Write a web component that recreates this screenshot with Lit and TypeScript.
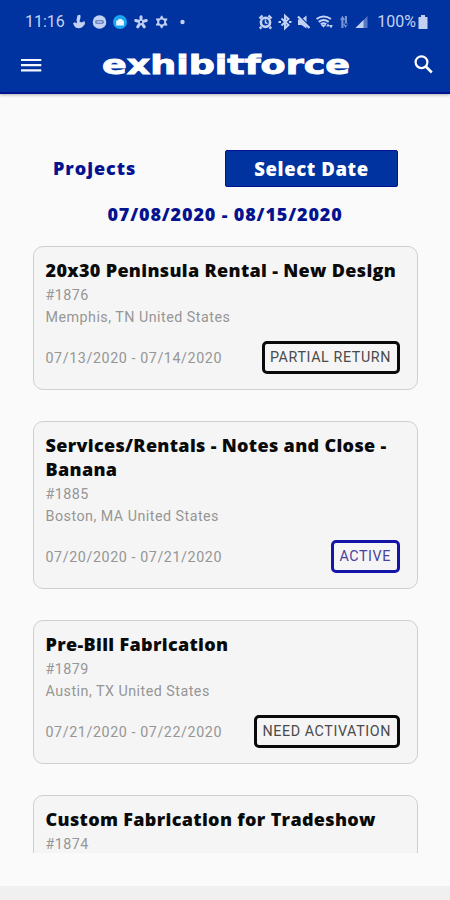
import { LitElement, html, css } from "lit";
import { customElement, property } from "lit/decorators.js";
import { classMap } from "lit/directives/class-map.js";

interface Project {
  title: string;
  number: string;
  location: string;
  dates: string;
  status: string;
  active?: boolean;
}

const projects: Project[] = [
  { title: "20x30 Peninsula Rental - New Design", number: "#1876", location: "Memphis, TN United States", dates: "07/13/2020 - 07/14/2020", status: "PARTIAL RETURN" },
  { title: "Services/Rentals - Notes and Close - Banana", number: "#1885", location: "Boston, MA United States", dates: "07/20/2020 - 07/21/2020", status: "ACTIVE", active: true },
  { title: "Pre-Bill Fabrication", number: "#1879", location: "Austin, TX United States", dates: "07/21/2020 - 07/22/2020", status: "NEED ACTIVATION" },
  { title: "Custom Fabrication for Tradeshow", number: "#1874", location: "", dates: "", status: "" },
];

@customElement("project-card")
class ProjectCard extends LitElement {
  @property({ attribute: false }) project!: Project;

  static styles = css`
    :host { display: block; flex: none; }
    .card {
      box-sizing: border-box;
      min-height: 144px;
      padding: 11px 17px 15px 11.5px;
      border: 1px solid #cfcfcf;
      border-radius: 10px;
      background: #f5f5f5;
      font-family: Roboto, sans-serif;
      color: #969696;
    }
    .title {
      margin: 0 -8px 2px 0;
      font: 800 18px/24px "Open Sans", sans-serif;
      letter-spacing: 0.33px;
      color: #0a0a0a;
    }
    .line { height: 22px; font-size: 14.3px; line-height: 22px; letter-spacing: 0.48px; }
    .foot { display: flex; justify-content: space-between; align-items: center; margin-top: 13px; height: 33px; }
    .foot .line { white-space: nowrap; letter-spacing: 0.58px; }
    .badge {
      box-sizing: border-box;
      height: 33px;
      padding: 0 6px 0 5px;
      border: 3px solid #0a0a0a;
      border-radius: 5px;
      font-size: 14.3px;
      line-height: 27px;
      letter-spacing: 0.6px;
      color: #4a4a4a;
      white-space: nowrap;
    }
    .badge.active { border-color: #1414a8; color: #4a40a0; }
  `;

  render() {
    const p = this.project;
    return html`
      <article class="card">
        <div class="title">${p.title}</div>
        <div class="line">${p.number}</div>
        <div class="line">${p.location}</div>
        ${p.status
          ? html`<div class="foot">
              <span class="line">${p.dates}</span>
              <span class=${classMap({ badge: true, active: !!p.active })}>${p.status}</span>
            </div>`
          : null}
      </article>
    `;
  }
}

@customElement("app-root")
class AppRoot extends LitElement {
  static styles = css`
    :host { display: block; }
    .screen { display: flex; flex-direction: column; width: 450px; height: 900px; overflow: hidden; background: #fafafa; }
    .top { flex: none; height: 94px; box-sizing: border-box; background: #0032a0; border-bottom: 2px solid #00128c; box-shadow: 0 1px 3px rgba(0, 0, 0, 0.3); color: #fff; }
    .status { display: flex; justify-content: space-between; align-items: center; height: 44px; padding: 0 22px 0 25px; font: 16px/46px Roboto, sans-serif; color: #c3d2f3; }
    .group { display: flex; align-items: center; height: 44px; }
    .clock { width: 41px; white-space: nowrap; }
    .icons { display: block; }
    .pct { white-space: nowrap; margin-right: 2px; }
    .bar { display: flex; align-items: center; height: 42px; }
    .menu { margin-left: 21px; }
    .logo { margin-left: 57px; overflow: visible; }
    .search { margin-left: 59px; }
    .bar svg { display: block; flex: none; }
    .head { display: flex; justify-content: space-between; align-items: center; flex: none; height: 37px; margin: 56px 52px 0 53px; font: 800 18px/37px "Open Sans", sans-serif; color: #04128f; }
    .projects { letter-spacing: 0.95px; }
    .button { width: 173px; height: 37px; box-sizing: border-box; border: 1px solid #04128f; border-radius: 2px; background: #0032a0; color: #fff; text-align: center; font-size: 18.5px; line-height: 35px; letter-spacing: 0.6px; }
    .range { flex: none; height: 26px; margin-top: 14px; text-align: center; font: 800 18px/26px "Open Sans", sans-serif; color: #04128f; letter-spacing: 0.85px; }
    .list { display: flex; flex-direction: column; gap: 31px; flex: none; height: 607px; margin: 19px 32px 0 33px; overflow: hidden; }
    .nav { flex: none; height: 14px; margin-top: 33px; background: #f0f0f0; }
  `;

  render() {
    return html`
      <main class="screen">
        <header class="top">
          <div class="status">
            <div class="group">
              <span class="clock">11:16</span>
              <svg class="icons" width="130" height="20" viewBox="66 12 130 20" fill="#c3d2f3">
                <path d="M77.500 15.5q2-1.500 3 0v2l-1 4 2 1 3-1.500.5 3-2.500 3q-4 2.500-7.500 0l-2-3.500 1.500-1.200 2.500 1-.5-3.500z" />
                <circle cx="99.500" cy="22" r="6.800" />
                <rect x="95" y="20" width="9" height="4" rx="2" fill="#7188c5" />
                <path d="M97 22h5" stroke="#d7e2fb" />
                <circle cx="120" cy="22" r="7" fill="#1ba5f2" />
                <path d="M116.200 20.500h1.500l1-1.500h3l1 1.500h1.200v5h-7.700z" fill="#e8f6ff" />
                <path d="M141 22V16.700M141 22l-5.300-1.500M141 22l5.300-1.500M141 22l-3.300 4.800M141 22l3.300 4.800" stroke="#c3d2f3" stroke-width="3" stroke-linecap="round" />
                <circle cx="141" cy="22" r="1.200" fill="#0032a0" />
                <path d="M161.700 15.800l1.800 3.100h3.600L165.300 22l1.800 3.100h-3.600l-1.800 3.100-1.800-3.100h-3.600l1.800-3.100-1.800-3.100h3.600z" stroke="#c3d2f3" stroke-linejoin="round" />
                <circle cx="161.700" cy="22" r="2.500" fill="#0032a0" />
                <circle cx="182.500" cy="22" r="2.200" />
              </svg>
            </div>
            <div class="group">
              <svg class="icons" width="119" height="20" viewBox="258 12 119 20" fill="#c3d2f3">
                <path d="M259.500 18.500l3-3M271.500 18.500l-3-3M261.500 27l-1.800 1.500M269.500 27l1.800 1.500" stroke="#c3d2f3" stroke-width="2.400" />
                <circle cx="265.500" cy="22.300" r="4.600" fill="none" stroke="#c3d2f3" stroke-width="2.600" />
                <path d="M265.500 19.500v3.200l2 1" fill="none" stroke="#c3d2f3" stroke-width="1.500" />
                <path d="M281.500 18.500l7 6.500-3.500 3.300V15.700l3.500 3.300-7 6.500M278.500 22h2.500M289 22h2.500" fill="none" stroke="#c3d2f3" stroke-width="2" />
                <path d="M298 19.500h3.500l5-4v13L301.500 25H298z" />
                <path d="M297.500 14.500l13 13" stroke="#0032a0" stroke-width="2" />
                <path d="M298 16.500l11.500 11.500" stroke="#c3d2f3" stroke-width="2.200" />
                <path d="M316.500 19q7-5 14.500 0M318.700 21.800q5-3.500 10 0M320.800 24.400q2.800-2 5.400 0" fill="none" stroke="#c3d2f3" stroke-width="2.100" />
                <path d="M323.500 27.500l-2.500-2.500h5zM328 23.500l1.800 3h-3.600zM331 28.500l-1.800-3.500h3.600z" />
                <path d="M340 20l2.500-4.500L345 20zM341.300 19h2.200v9h-2.200zM343 23.500l2.500 4.500 2.500-4.500zM344.800 16h2.200v9h-2.200z" opacity=".6" />
                <path d="M355.500 28L367.500 16v12z" opacity=".45" />
                <path d="M355.500 28l8-8v8z" />
              </svg>
              <span class="pct">100%</span>
              <svg class="icons" width="10" height="20" viewBox="0 0 10 20"><path d="M3 3h4v2h2.500v12H.5V5H3z" fill="#c3d2f3" /></svg>
            </div>
          </div>
          <div class="bar">
            <svg class="menu" width="21" height="18" viewBox="0 0 21 18"><path d="M0 4h20.300M0 9.200h20.300M0 14.400h20.300" stroke="#f4f8ff" stroke-width="2.200" /></svg>
            <svg class="logo" width="254" height="36" viewBox="-2 -5 254 36">
              <text x="1" y="22" textLength="248" lengthAdjust="spacingAndGlyphs" font-family="DejaVu Sans, sans-serif" font-weight="700" font-size="26" fill="#fff" stroke="#fff" stroke-width="0.900">exhibitforce</text>
            </svg>
            <svg class="search" width="24" height="24" viewBox="0 0 24 24"><circle cx="9.500" cy="9.200" r="5.900" fill="none" stroke="#fff" stroke-width="2.200" /><path d="M13.800 13.500l6 6" stroke="#fff" stroke-width="2.500" /></svg>
          </div>
        </header>
        <section class="head">
          <span class="projects">Projects</span>
          <div class="button">Select Date</div>
        </section>
        <div class="range">07/08/2020 - 08/15/2020</div>
        <section class="list">
          ${projects.map((p) => html`<project-card .project=${p}></project-card>`)}
        </section>
        <div class="nav"></div>
      </main>
    `;
  }
}
